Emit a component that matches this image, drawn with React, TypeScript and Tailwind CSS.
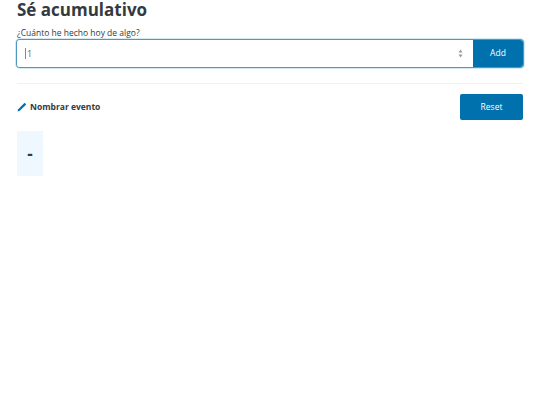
export default function App() {
  return (
    <div className="min-h-[405px] bg-white px-[17px] font-['Open_Sans',sans-serif] text-[#343a40]">
      <h1 className="text-[17px] leading-[20px] font-bold">Sé acumulativo</h1>
      <label className="mt-[7px] block text-[8.5px] leading-[12px]">¿Cuánto he hecho hoy de algo?</label>
      <div className="mt-[1px] flex h-[27px] rounded-[3px] shadow-[0_0_0_1px_#4f98be,0_0_0_2px_#d5e9f4]">
        <div className="flex flex-1 items-center justify-between rounded-l-[3px] bg-white pl-[8px] pr-[10px]">
          <span className="border-l border-[#888] pl-[1px] text-[9px] leading-[11px] text-[#666]">1</span>
          <svg width="5" height="9" viewBox="0 0 5 9" className="text-[#999]">
            <path d="M2.5 0.5 L4.5 3.5 H0.5 Z M2.5 8.5 L4.5 5.5 H0.5 Z" fill="currentColor" />
          </svg>
        </div>
        <button className="w-[50px] rounded-r-[3px] bg-[#0071ad] text-[8.5px] text-white">Add</button>
      </div>
      <div className="mt-[16px] border-t border-[#eef0f2]" />
      <div className="mt-[10px] flex items-center justify-between">
        <div className="flex items-center gap-[3px] text-[8.5px] font-bold">
          <svg width="10" height="10" viewBox="0 0 10 10">
            <path d="M0.5 9.5 L1.2 7.2 L7.6 0.8 L9.2 2.4 L2.8 8.8 Z" fill="#0071ad" />
          </svg>
          <span>Nombrar evento</span>
        </div>
        <button className="h-[26px] w-[63px] rounded-[2px] bg-[#0071ad] text-[8.5px] text-white">Reset</button>
      </div>
      <div className="mt-[11px] flex h-[45px] w-[26px] items-center justify-center bg-[#f0f8ff] text-[17px] font-bold">-</div>
    </div>
  );
}
